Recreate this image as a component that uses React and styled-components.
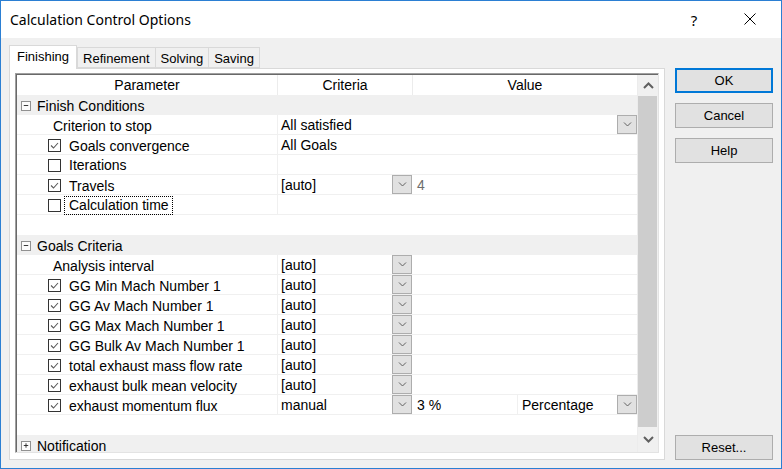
import React from "react";
import styled, { createGlobalStyle } from "styled-components";

const GlobalStyle = createGlobalStyle`
  html, body {
    margin: 0;
    padding: 0;
    background: #ffffff;
  }
  * {
    box-sizing: border-box;
  }
`;

const rows = [
  { type: "group", label: "Finish Conditions", open: true },
  { label: "Criterion to stop", criteria: "All satisfied", span: true, spanDrop: true },
  { check: true, label: "Goals convergence", criteria: "All Goals", span: true },
  { check: false, label: "Iterations", span: true },
  { check: true, label: "Travels", criteria: "[auto]", drop: true, value: "4", muted: true },
  { check: false, label: "Calculation time", span: true, focus: true },
  { type: "blank" },
  { type: "group", label: "Goals Criteria", open: true },
  { label: "Analysis interval", criteria: "[auto]", drop: true },
  { check: true, label: "GG Min Mach Number 1", criteria: "[auto]", drop: true },
  { check: true, label: "GG Av Mach Number 1", criteria: "[auto]", drop: true },
  { check: true, label: "GG Max Mach Number 1", criteria: "[auto]", drop: true },
  { check: true, label: "GG Bulk Av Mach Number 1", criteria: "[auto]", drop: true },
  { check: true, label: "total exhaust mass flow rate", criteria: "[auto]", drop: true },
  { check: true, label: "exhaust bulk mean velocity", criteria: "[auto]", drop: true },
  { check: true, label: "exhaust momentum flux", criteria: "manual", drop: true, value: "3 %", unit: "Percentage" },
  { type: "blank" },
  { type: "group", label: "Notification", open: false },
];

const tabs = ["Finishing", "Refinement", "Solving", "Saving"];

const Chevron = () => (
  <svg width="9" height="5" viewBox="0 0 9 5">
    <polyline points="1,0.5 4.5,4 8,0.5" fill="none" stroke="#606060" strokeWidth="1" />
  </svg>
);

const ScrollArrow = ({ up }) => (
  <svg width="11" height="7" viewBox="0 0 11 7">
    <polyline
      points={up ? "1,6 5.5,1.5 10,6" : "1,1 5.5,5.5 10,1"}
      fill="none"
      stroke="#606060"
      strokeWidth="2"
    />
  </svg>
);

const CheckBox = ({ checked }) => (
  <Box>
    {checked && (
      <svg width="11" height="11" viewBox="0 0 11 11">
        <polyline points="2,5.5 4.5,8 9,3" fill="none" stroke="#5a5a5a" strokeWidth="1.1" />
      </svg>
    )}
  </Box>
);

const ParamCell = ({ row }) => (
  <Param $indent={row.check === undefined ? 36 : 31}>
    {row.check !== undefined && <CheckBox checked={row.check} />}
    {row.focus ? <Focused>{row.label}</Focused> : <span>{row.label}</span>}
  </Param>
);

const TableRow = ({ row }) => {
  if (row.type === "group") {
    return (
      <GroupRow>
        <Toggle>
          <svg width="9" height="9" viewBox="0 0 9 9">
            <line x1="2" y1="4.5" x2="7" y2="4.5" stroke="#222" strokeWidth="1" />
            {!row.open && <line x1="4.5" y1="2" x2="4.5" y2="7" stroke="#222" strokeWidth="1" />}
          </svg>
        </Toggle>
        {row.label}
      </GroupRow>
    );
  }
  if (row.type === "blank") return <BlankRow />;

  return (
    <Row>
      <ParamCell row={row} />
      <Cell $span={row.span}>
        <CellText>{row.criteria}</CellText>
        {(row.drop || row.spanDrop) && (
          <DropButton>
            <Chevron />
          </DropButton>
        )}
      </Cell>
      {!row.span && (
        <ValueCell>
          <ValueText $muted={row.muted} $narrow={!!row.unit}>
            {row.value}
          </ValueText>
          {row.unit && (
            <Unit>
              <CellText>{row.unit}</CellText>
              <DropButton>
                <Chevron />
              </DropButton>
            </Unit>
          )}
        </ValueCell>
      )}
    </Row>
  );
};

const App = () => (
  <>
    <GlobalStyle />
    <Window>
      <TitleBar>
        <Title>Calculation Control Options</Title>
        <TitleButtons>
          <Help>?</Help>
          <Close>
            <svg width="12" height="12" viewBox="0 0 12 12">
              <line x1="0.5" y1="0.5" x2="11.5" y2="11.5" stroke="#000" strokeWidth="1" />
              <line x1="11.5" y1="0.5" x2="0.5" y2="11.5" stroke="#000" strokeWidth="1" />
            </svg>
          </Close>
        </TitleButtons>
      </TitleBar>
      <Body>
        <TabControl>
          <TabStrip>
            {tabs.map((t, i) => (
              <Tab key={t} $active={i === 0}>
                {t}
              </Tab>
            ))}
          </TabStrip>
          <Panel>
            <Grid>
              <Rows>
                <HeaderRow>
                  <HeaderCell>Parameter</HeaderCell>
                  <HeaderCell $line>Criteria</HeaderCell>
                  <HeaderCell $line>Value</HeaderCell>
                </HeaderRow>
                {rows.map((r, i) => (
                  <TableRow key={i} row={r} />
                ))}
              </Rows>
              <ScrollBar>
                <ScrollButton $h={21}>
                  <ScrollArrow up />
                </ScrollButton>
                <Thumb />
                <ScrollButton $h={25}>
                  <ScrollArrow />
                </ScrollButton>
              </ScrollBar>
            </Grid>
          </Panel>
        </TabControl>
        <Buttons>
          <Button $default>OK</Button>
          <Button>Cancel</Button>
          <Button>Help</Button>
          <Button $bottom>Reset...</Button>
        </Buttons>
      </Body>
    </Window>
  </>
);

export default App;

const Window = styled.div`
  width: 782px;
  height: 469px;
  border: 1px solid #2b7fd3;
  display: flex;
  flex-direction: column;
  background: #f0f0f0;
  font-family: "Liberation Sans", Arial, sans-serif;
  color: #000;
  overflow: hidden;
`;

const TitleBar = styled.div`
  height: 37px;
  background: #fff;
  display: flex;
  align-items: center;
  justify-content: space-between;
  padding-left: 9px;
`;

const Title = styled.div`
  font-family: "Noto Sans", sans-serif;
  font-size: 14px;
  padding-bottom: 1px;
`;

const TitleButtons = styled.div`
  display: flex;
  align-items: center;
  height: 100%;
`;

const Help = styled.div`
  width: 46px;
  text-align: center;
  font-family: "Noto Sans", sans-serif;
  font-size: 15px;
  margin-right: 4px;
`;

const Close = styled.div`
  width: 60px;
  display: flex;
  justify-content: center;
  padding-right: 2px;
  padding-bottom: 2px;
`;

const Body = styled.div`
  flex: 1;
  display: flex;
  gap: 10px;
  padding: 7px 8px 8px 8px;
`;

const TabControl = styled.div`
  width: 656px;
  display: flex;
  flex-direction: column;
`;

const TabStrip = styled.div`
  display: flex;
  height: 23px;
  align-items: flex-end;
  position: relative;
  z-index: 1;
`;

const Tab = styled.div`
  font-size: 13px;
  height: ${({ $active }) => ($active ? "24px" : "21px")};
  line-height: ${({ $active }) => ($active ? "22px" : "21px")};
  padding: 0 ${({ $active }) => ($active ? "7px" : "5px")};
  margin-bottom: ${({ $active }) => ($active ? "-1px" : "0")};
  background: ${({ $active }) => ($active ? "#fff" : "#f0f0f0")};
  border: 1px solid #d9d9d9;
  border-bottom: ${({ $active }) => ($active ? "none" : "1px solid #d9d9d9")};
  margin-left: -1px;
  &:first-child,
  &:nth-child(2) {
    margin-left: 0;
  }
`;

const Panel = styled.div`
  height: 392px;
  background: #fff;
  border: 1px solid #d9d9d9;
  padding: 4px 5px;
`;

const Grid = styled.div`
  width: 644px;
  height: 380px;
  display: flex;
  border-top: 1px solid #a0a0a0;
  border-left: 1px solid #a0a0a0;
  border-right: 1px solid #e3e3e3;
  border-bottom: 1px solid #e3e3e3;
  box-shadow: inset 1px 1px 0 #696969;
  padding: 1px 0 0 1px;
  overflow: hidden;
`;

const Rows = styled.div`
  width: 620px;
  font-size: 14px;
  overflow: hidden;
`;

const HeaderRow = styled.div`
  display: grid;
  grid-template-columns: 260px 135px 225px;
  height: 20px;
`;

const HeaderCell = styled.div`
  text-align: center;
  line-height: 20px;
  border-left: ${({ $line }) => ($line ? "1px solid #ececec" : "none")};
`;

const Row = styled.div`
  display: grid;
  grid-template-columns: 260px 135px 225px;
  height: 20px;
  border-bottom: 1px solid #f0f0f0;
`;

const GroupRow = styled.div`
  height: 20px;
  background: #f0f0f0;
  display: flex;
  align-items: center;
  padding-left: 4px;
  padding-top: 1px;
  gap: 6px;
`;

const BlankRow = styled.div`
  height: 20px;
`;

const Toggle = styled.div`
  width: 10px;
  height: 10px;
  border: 1px solid #919191;
  background: #fcfcfc;
  display: flex;
  align-items: center;
  justify-content: center;
`;

const Param = styled.div`
  display: flex;
  align-items: center;
  padding-left: ${({ $indent }) => $indent}px;
  padding-top: 1px;
  gap: 8px;
  white-space: nowrap;
`;

const Box = styled.div`
  width: 13px;
  height: 13px;
  border: 1px solid #333;
  background: #fff;
  display: flex;
  align-items: center;
  justify-content: center;
  flex-shrink: 0;
`;

const Focused = styled.span`
  outline: 1px dotted #000;
  outline-offset: 0;
  padding: 0 3px 0 4px;
  margin-left: -4px;
  line-height: 17px;
`;

const Cell = styled.div`
  grid-column: ${({ $span }) => ($span ? "span 2" : "auto")};
  display: flex;
  align-items: flex-start;
  border-left: 1px solid #f0f0f0;
  min-width: 0;
`;

const CellText = styled.div`
  flex: 1;
  padding-left: 3px;
  padding-top: 1px;
  line-height: 19px;
  white-space: nowrap;
`;

const DropButton = styled.div`
  width: 20px;
  height: 19px;
  background: #e1e1e1;
  border: 1px solid #adadad;
  display: flex;
  align-items: center;
  justify-content: center;
  flex-shrink: 0;
`;

const ValueCell = styled.div`
  display: flex;
`;

const ValueText = styled.div`
  width: ${({ $narrow }) => ($narrow ? "105px" : "auto")};
  flex: ${({ $narrow }) => ($narrow ? "none" : "1")};
  padding-left: 5px;
  padding-top: 1px;
  line-height: 19px;
  color: ${({ $muted }) => ($muted ? "#6d6d6d" : "#000")};
`;

const Unit = styled.div`
  flex: 1;
  display: flex;
  border-left: 1px solid #f0f0f0;
  padding-left: 1px;
`;

const ScrollBar = styled.div`
  width: 21px;
  height: 377px;
  background: #f0f0f0;
  border-left: 1px solid #ececec;
  display: flex;
  flex-direction: column;
`;

const ScrollButton = styled.div`
  height: ${({ $h }) => $h}px;
  display: flex;
  align-items: center;
  justify-content: center;
`;

const Thumb = styled.div`
  height: 331px;
  width: 19px;
  background: #cdcdcd;
`;

const Buttons = styled.div`
  width: 98px;
  display: flex;
  flex-direction: column;
  gap: 10px;
  padding-top: 23px;
`;

const Button = styled.div`
  height: 25px;
  background: #e1e1e1;
  border: ${({ $default }) => ($default ? "2px solid #0078d7" : "1px solid #adadad")};
  font-size: 13px;
  display: flex;
  align-items: center;
  justify-content: center;
  margin-top: ${({ $bottom }) => ($bottom ? "auto" : "0")};
`;
